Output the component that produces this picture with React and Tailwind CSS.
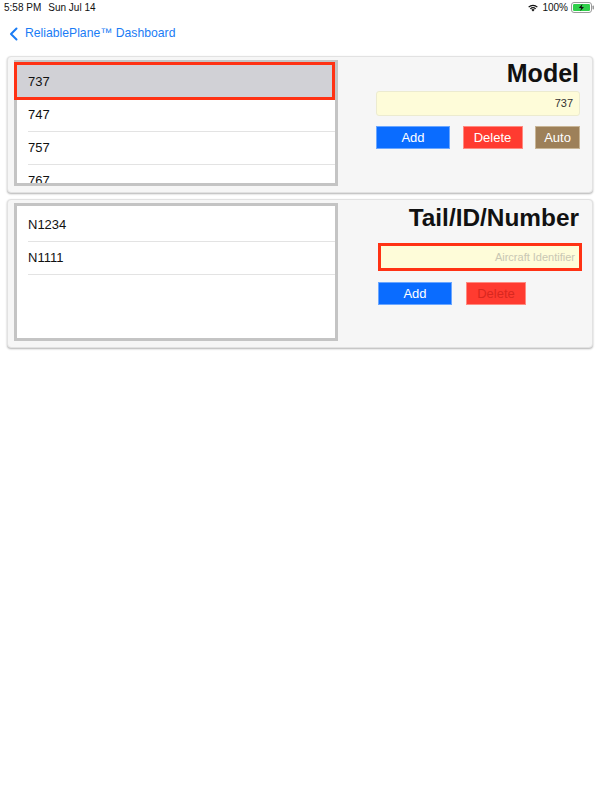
import React from "react";

function Battery() {
  return (
    <svg width="24" height="11" viewBox="0 0 24 11">
      <rect x="0.5" y="0.5" width="20" height="10" rx="2.5" fill="none" stroke="#9a9a9a" />
      <rect x="2" y="2" width="17" height="7" rx="1.2" fill="#2fcf4a" />
      <rect x="21.5" y="3.5" width="1.5" height="4" rx="0.7" fill="#9a9a9a" />
      <path d="M11.5 1.8 L7.8 6 L10.2 6 L9.2 9.3 L13 5 L10.6 5 Z" fill="#111" />
    </svg>
  );
}

function Wifi() {
  return (
    <svg width="12" height="9" viewBox="0 0 12 9">
      <path d="M6 8.6 L4.3 6.8 A2.5 2.5 0 0 1 7.7 6.8 Z" fill="#111" />
      <path d="M2.9 5.4 A4.5 4.5 0 0 1 9.1 5.4 L8.2 6.3 A3.2 3.2 0 0 0 3.8 6.3 Z" fill="#111" />
      <path d="M1.2 3.7 A7 7 0 0 1 10.8 3.7 L9.9 4.6 A5.7 5.7 0 0 0 2.1 4.6 Z" fill="#111" />
    </svg>
  );
}

function Row({ label }) {
  return (
    <div className="pl-[11px]">
      <div className="h-[33px] flex items-center text-[13px] text-[#111] border-b border-[#e3e3e3]">
        {label}
      </div>
    </div>
  );
}

export default function App() {
  return (
    <div className="w-[600px] h-[800px] bg-white relative" style={{ fontFamily: '"Liberation Sans", Arial, sans-serif' }}>
      {/* status bar */}
      <div className="h-[14px] flex items-center justify-between px-[4px] pt-[1px] text-[10px] text-[#111]">
        <div className="flex gap-[7px]">
          <span>5:58 PM</span>
          <span>Sun Jul 14</span>
        </div>
        <div className="flex items-center gap-[3px] pr-[1px]">
          <Wifi />
          <span>100%</span>
          <Battery />
        </div>
      </div>
      {/* nav */}
      <div className="h-[38px] flex items-center pl-[9px] pt-[1px] gap-[6px] text-[12.2px] text-[#1a7cf5]">
        <svg width="10" height="14" viewBox="0 0 10 14">
          <path d="M7.5 1.5 L2 7 L7.5 12.5" fill="none" stroke="#1a7cf5" strokeWidth="2" strokeLinecap="round" strokeLinejoin="round" />
        </svg>
        <span>ReliablePlane™ Dashboard</span>
      </div>

      <div className="px-[7px] pt-[4px] flex flex-col gap-[6px]">
        {/* Card 1 */}
        <div className="h-[137px] bg-[#f6f6f6] rounded-[4px] border border-[#e2e2e2] shadow-[0_1px_2px_rgba(0,0,0,0.3)] flex pl-[6px] pt-[3px]">
          <div className="w-[324px] h-[126px] border-[3px] border-[#c4c4c4] bg-white flex flex-col">
            <div className="h-[38px] -ml-[3px] -mt-[1px] border-[3px] border-[#ff3214] bg-[#d1d1d6] flex items-center pl-[11px] pt-[1px] text-[13px] text-[#111]">
              737
            </div>
            <div className="flex-1 overflow-hidden -mt-[1px]">
              <Row label="747" />
              <Row label="757" />
              <Row label="767" />
            </div>
          </div>
          <div className="flex-1 flex flex-col items-end pr-[12px]">
            <div className="text-[25px] font-bold leading-[28px] text-[#111] -mt-[1px] mr-[1px]">Model</div>
            <div className="mt-[4px] w-[204px] h-[25px] bg-[#fefcd9] rounded-[3px] border border-[#ecebd0] flex items-center justify-end pr-[6px] text-[11px] text-[#333]">
              737
            </div>
            <div className="mt-[10px] w-[204px] flex justify-between">
              <div className="w-[74px] h-[23px] bg-[#0a6cff] border border-[#6aa6ff] flex items-center justify-center text-[13px] text-white">Add</div>
              <div className="w-[60px] h-[23px] bg-[#ff3b30] border border-[#ff8a80] flex items-center justify-center text-[13px] text-white">Delete</div>
              <div className="w-[45px] h-[23px] bg-[#9d8059] border border-[#c8b596] flex items-center justify-center text-[13px] text-white">Auto</div>
            </div>
          </div>
        </div>

        {/* Card 2 */}
        <div className="h-[149px] bg-[#f6f6f6] rounded-[4px] border border-[#e2e2e2] shadow-[0_1px_2px_rgba(0,0,0,0.3)] flex pl-[6px] pt-[3px]">
          <div className="w-[324px] h-[138px] border-[3px] border-[#c4c4c4] bg-white overflow-hidden pt-[3px]">
            <Row label="N1234" />
            <Row label="N1111" />
          </div>
          <div className="flex-1 flex flex-col items-end pr-[10px]">
            <div className="text-[24.4px] font-bold leading-[28px] text-[#111] mt-[1px] mr-[3px]">Tail/ID/Number</div>
            <div className="mt-[11px] w-[204px] h-[28px] bg-[#fefcd9] border-[3px] border-[#ff3214] flex items-center justify-end pr-[4px] text-[11px] text-[#c9c7b4]">
              Aircraft Identifier
            </div>
            <div className="mt-[11px] w-[204px] flex">
              <div className="w-[74px] h-[23px] bg-[#0a6cff] border border-[#6aa6ff] flex items-center justify-center text-[13px] text-white">Add</div>
              <div className="ml-[14px] w-[60px] h-[23px] bg-[#ff3b30] border border-[#ff8a80] flex items-center justify-center text-[13px] text-[#d9281f]">Delete</div>
            </div>
          </div>
        </div>
      </div>
    </div>
  );
}
